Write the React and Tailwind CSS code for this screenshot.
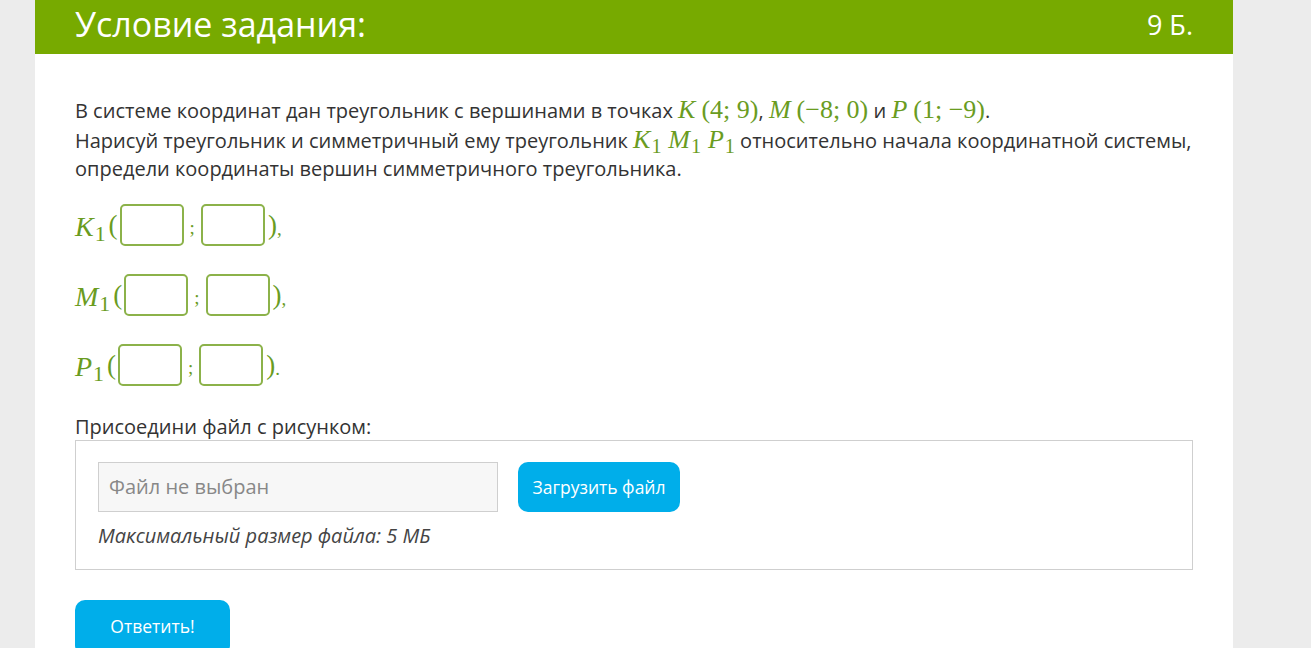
import React from 'react';

const mathFont = { fontFamily: '"Liberation Serif", "DejaVu Serif", serif' };

// a math symbol in the green serif style, with optional subscript
const MathVar = ({ name, sub }) => (
    <span className="text-[#6a9c1f] leading-none" style={mathFont}>
        <i>{name}</i>
        {sub && <span className="relative top-[5px] text-[0.78em] ml-[1px] leading-none">{sub}</span>}
    </span>
);

const Point = ({ name, coords }) => (
    <span className="text-[26px] text-[#6a9c1f] leading-none" style={mathFont}>
        <i>{name}</i>
        <span className="ml-[6px]">({coords})</span>
    </span>
);

const AnswerBox = () => (
    <input
        type="text"
        className="w-[64px] h-[42px] rounded-[5px] border-2 border-[#8cb24a] bg-white outline-none"
    />
);

const rows = [
    { name: 'K', end: ',' },
    { name: 'M', end: ',' },
    { name: 'P', end: '.' },
];

const App = () => {
    return (
        <div className="min-h-screen bg-[#ececec]" style={{ fontFamily: '"Open Sans", sans-serif' }}>
            <div className="ml-[35px] w-[1198px] bg-white min-h-[648px]">
                <div className="h-[54px] bg-[#77aa00] px-10 flex items-center justify-between pb-[6px] text-white">
                    <h1 className="text-[34px] leading-none">Условие задания:</h1>
                    <span className="text-[27px] leading-none">9 Б.</span>
                </div>

                <div className="px-10 pt-[43px] text-[#333] text-[20px]">
                    <p className="leading-[28px]">
                        В системе координат дан треугольник с вершинами в точках <Point name="K" coords="4; 9" />,{' '}
                        <Point name="M" coords="−8; 0" /> и <Point name="P" coords="1; −9" />.
                        <br />
                        Нарисуй треугольник и симметричный ему треугольник{' '}
                        <span className="text-[26px] leading-none">
                            <MathVar name="K" sub="1" /> <MathVar name="M" sub="1" /> <MathVar name="P" sub="1" />
                        </span>{' '}
                        относительно начала координатной системы,
                        <br />
                        определи координаты вершин симметричного треугольника.
                    </p>

                    <div className="mt-[21px] flex flex-col gap-[28px]">
                        {rows.map(row => (
                            <div key={row.name} className="flex items-center h-[42px]">
                                <span className="text-[28px] mr-[3px]">
                                    <MathVar name={row.name} sub="1" />
                                </span>
                                <span className="text-[27px] text-[#6a9c1f] mr-[2px]" style={mathFont}>(</span>
                                <AnswerBox />
                                <span className="text-[#6a9c1f] mx-[6px] text-[19px] mt-[6px]" style={mathFont}>;</span>
                                <AnswerBox />
                                <span className="text-[27px] text-[#6a9c1f] ml-[3px]" style={mathFont}>)</span>
                                <span className="text-[#6a9c1f] text-[19px] mt-[8px]" style={mathFont}>{row.end}</span>
                            </div>
                        ))}
                    </div>

                    <p className="mt-[28px] leading-[26px]">Присоедини файл с рисунком:</p>
                    <div className="border border-[#cfcfcf] px-[22px] pt-[21px] pb-[19px]">
                        <div className="flex items-center gap-5">
                            <div className="w-[400px] h-[50px] bg-[#f7f7f7] border border-[#cfcfcf] flex items-center px-[10px] text-[#888]">
                                Файл не выбран
                            </div>
                            <button className="h-[50px] w-[162px] rounded-[10px] bg-[#00aeea] text-white text-[17.5px]">
                                Загрузить файл
                            </button>
                        </div>
                        <p className="mt-[10px] italic text-[#444] leading-[28px]">Максимальный размер файла: 5 МБ</p>
                    </div>

                    <button className="mt-[30px] h-[56px] w-[155px] rounded-[10px] bg-[#00aeea] text-white text-[17.5px] pb-[4px]">
                        Ответить!
                    </button>
                </div>
            </div>
        </div>
    );
};

export default App;
